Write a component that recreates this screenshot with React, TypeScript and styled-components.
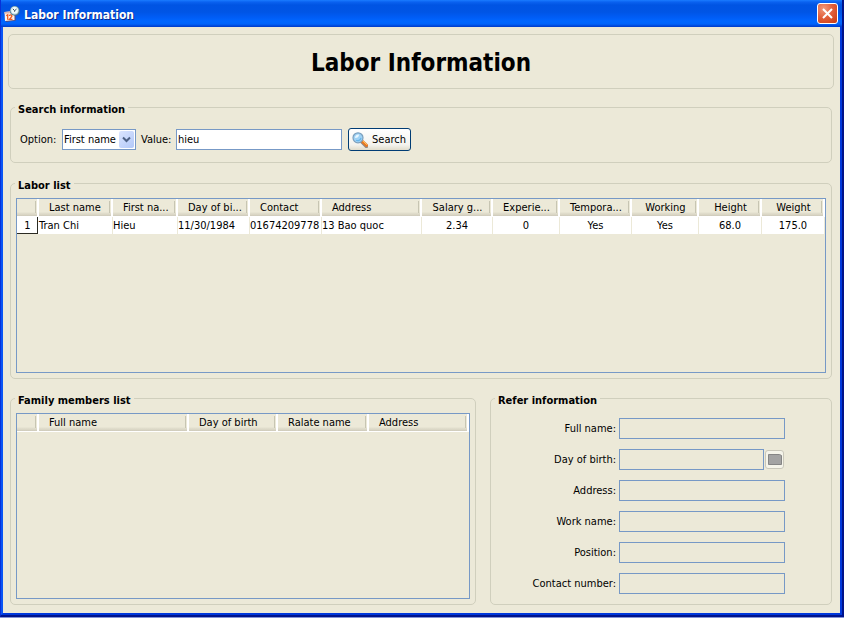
import React from "react";
import styled, { createGlobalStyle, css } from "styled-components";

const face = "#ece9d8";
const line = "#d0cfbd";
const blue = "#7799c6";

const GlobalStyle = createGlobalStyle`
  *, *::before, *::after { box-sizing: border-box; }
  body {
    margin: 0;
    background: #8593d6;
    color: #000;
    font-family: "DejaVu Sans Condensed", "DejaVu Sans", sans-serif;
    font-stretch: condensed;
    font-size: 11px;
    line-height: 14px;
  }
  input, select, button { font: inherit; color: inherit; margin: 0; }
`;

const Frame = styled.div`
  min-height: calc(100vh - 1px);
  display: grid;
  grid-template-rows: auto 1fr;
  border: solid;
  border-width: 0 2px 2px 1px;
  border-color: #00138c #00138c #00138c #0831d9;
`;

const TitleBar = styled.header`
  height: 27px;
  display: flex;
  align-items: center;
  gap: 4px;
  padding: 0 4px 0 3px;
  background: linear-gradient(
    #1a7cff 0, #0a62f0 2px, #0054e3 5px, #0055e5 12px, #005cf5 17px,
    #0066ff 21px, #0064fa 24px, #0046d8 26px, #003cc8 27px
  );
`;

const Caption = styled.span`
  flex: 1;
  color: #fff;
  font-size: 12px;
  font-weight: bold;
  line-height: 16px;
  padding-top: 2px;
  text-shadow: 1px 1px 0 #0a2a8c;
`;

const CloseButton = styled.button`
  width: 21px;
  height: 21px;
  padding: 0;
  display: grid;
  place-items: center;
  border: 1px solid #fff;
  border-radius: 3px;
  background: radial-gradient(circle at 30% 25%, #f09a7c 0, #e2603c 45%, #c8390f 100%);
`;

const Client = styled.main`
  min-width: 0;
  display: grid;
  grid-template-columns: minmax(0, 1fr);
  grid-template-rows: auto auto 1fr auto;
  padding: 7px 8px 8px 7px;
  background: ${face};
  border: solid;
  border-width: 0 2px 2px;
  border-color: #0042e6 #0038dc #0038dc #0a55f5;
`;

const Banner = styled.h1`
  margin: 0 -2px 10px;
  height: 55px;
  padding-top: 2px;
  display: flex;
  align-items: center;
  justify-content: center;
  border: 1px solid ${line};
  border-radius: 5px;
  font-size: 24px;
  line-height: 30px;
  font-weight: bold;
`;

const Group = styled.fieldset`
  min-width: 0;
  margin: 0;
  padding: 6px 5px 5px;
  border: 1px solid ${line};
  border-radius: 5px;
  display: grid;
  grid-template-columns: minmax(0, 1fr);
`;

const Legend = styled.legend`
  height: 17px;
  margin-left: -1px;
  padding: 4px 3px 0;
  line-height: 13px;
  font-weight: bold;
`;

const SearchGroup = styled(Group)`
  margin-bottom: 12px;
`;

const LaborGroup = styled(Group)`
  margin-bottom: 11px;
`;

const SearchRow = styled.form`
  display: flex;
  align-items: center;
  padding: 6px 4px;
`;

const SearchLabel = styled.label<{ $width: number }>`
  width: ${(p) => p.$width}px;
`;

const fieldStyle = css`
  height: 21px;
  border: 1px solid ${blue};
  border-radius: 0;
  outline: none;
`;

const SelectBox = styled.span`
  position: relative;
  width: 74px;
  height: 21px;
  margin-right: 5px;
`;

const Select = styled.select`
  ${fieldStyle}
  width: 100%;
  display: block;
  appearance: none;
  padding: 0 0 0 1px;
  background: #fff;
`;

const SelectArrow = styled.span`
  position: absolute;
  top: 2px;
  right: 2px;
  width: 15px;
  height: 17px;
  display: grid;
  place-items: center;
  border-radius: 2px;
  background: linear-gradient(135deg, #dbe5ff, #b2c8f8);
  pointer-events: none;
`;

const TextInput = styled.input`
  ${fieldStyle}
  width: 166px;
  padding: 0 1px;
  background: #fff;
`;

const SearchButton = styled.button`
  height: 23px;
  min-width: 63px;
  margin-left: 6px;
  padding: 0 4px 0 3px;
  display: flex;
  align-items: center;
  justify-content: space-between;
  gap: 3px;
  border: 1px solid #003c74;
  border-radius: 3px;
  background: linear-gradient(#fff, #f4f3ee 75%, #e0dccb);
`;

const TableBox = styled.div`
  border: 1px solid ${blue};
`;

const Table = styled.table`
  width: 100%;
  table-layout: fixed;
  border-collapse: separate;
  border-spacing: 0;
`;

const Column = styled.col<{ $width: number }>`
  width: ${(p) => p.$width}px;
`;

const HeadCell = styled.th<{ $center?: boolean }>`
  position: relative;
  height: 18px;
  padding: 0 ${(p) => (p.$center ? 3 : 0)}px 0 ${(p) => (p.$center ? 5 : 10)}px;
  overflow: hidden;
  font-weight: normal;
  line-height: 14px;
  text-align: ${(p) => (p.$center ? "center" : "left")};
  white-space: nowrap;
  border-right: 2px solid #fff;
  border-bottom: 1px solid #fff;
  background: linear-gradient(${face} 13px, #e2dfce 14px, #d8d4c3 16px, #cbc7b8 17px);
  &::after {
    content: "";
    position: absolute;
    top: 2px;
    right: 1px;
    width: 1px;
    height: 12px;
    background: #c7c5b2;
  }
`;

const Cell = styled.td<{ $center?: boolean }>`
  height: 17px;
  padding: 0;
  white-space: nowrap;
  text-align: ${(p) => (p.$center ? "center" : "left")};
  background: #fff;
  border-right: 1px solid ${face};
`;

const RowHead = styled.th`
  padding: 0;
  font-weight: normal;
  text-align: center;
  background: #fff;
  border-right: 1px solid #fff;
  box-shadow: inset -1px -1px 0 #2b2b22;
`;

const Lower = styled.div`
  display: grid;
  grid-template-columns: 466fr 342fr;
  gap: 14px;
`;

const ReferForm = styled.div`
  display: grid;
  grid-template-columns: 1fr 166px;
  align-items: center;
  gap: 10px 3px;
  padding: 5px 41px 5px 4px;
`;

const ReferLabel = styled.label`
  text-align: right;
`;

const ReferInput = styled.input`
  ${fieldStyle}
  width: 100%;
  min-width: 0;
  padding: 0 2px;
  background: ${face};
`;

const DateField = styled.div`
  display: flex;
  align-items: center;
  gap: 1px;
  padding-right: 1px;
`;

const DateButton = styled.button`
  flex: none;
  width: 19px;
  height: 19px;
  padding: 0;
  display: grid;
  place-items: center;
  border: 1px solid #c9c7ba;
  border-radius: 3px;
  background: #f5f4ea;
`;

const AppIcon = () => (
  <svg width="16" height="16" viewBox="0 0 16 16" aria-hidden="true">
    <path d="M.8 7l10.400-1.500.6 9L2 16z" fill="#5a4c78" />
    <path d="M.5 6l10-1v9l-9.500 1z" fill="#fff1e8" />
    <path d="M.5 6l10-1v1.800l-10 1z" fill="#dcb5ae" />
    <path d="M2.300 9.800l1.400-1v5M5.300 10c.3-1.600 3-1.400 2.500.4L5.500 13.300h3" fill="none" stroke="#ee5a20" strokeWidth="1.300" />
    <circle cx="10.800" cy="4.900" r="4.900" fill="#4f7488" />
    <circle cx="10.600" cy="4.500" r="4.200" fill="#a9cfdc" />
    <circle cx="10.600" cy="4.400" r="3.300" fill="#eefafc" />
    <path d="M8.800 2.800l1.800 1.900 1.900-1.600M10.600 4.700v1" fill="none" stroke="#2f4a5c" strokeWidth="1" />
  </svg>
);

const SearchIcon = () => (
  <svg width="16" height="16" viewBox="0 0 16 16" aria-hidden="true">
    <path d="M9.500 10l5 4.800" stroke="#8f8d88" strokeWidth="3" strokeLinecap="round" />
    <path d="M9.800 8.800l4.700 4.500" stroke="#e87722" strokeWidth="3" strokeLinecap="round" />
    <path d="M10.500 8.600l4 3.900" stroke="#ffc95a" strokeWidth="1" strokeLinecap="round" />
    <circle cx="6" cy="5.800" r="5" fill="#9fd2f5" stroke="#7b9fbd" strokeWidth="1.200" />
    <path d="M3 6a3.500 3.500 0 0 1 4-3.500C7 5 5.500 6 3 6z" fill="#e8f7ff" />
    <path d="M4 8.300c2 1 4.500 0 5-2.300" fill="none" stroke="#66b5ec" strokeWidth="1.200" />
  </svg>
);

type Col = { title: string; width: number; value?: string; center?: boolean };

const laborColumns: Col[] = [
  { title: "Last name", width: 74, value: "Tran Chi" },
  { title: "First na...", width: 65, value: "Hieu" },
  { title: "Day of bi...", width: 72, value: "11/30/1984" },
  { title: "Contact", width: 72, value: "01674209778" },
  { title: "Address", width: 100, value: "13 Bao quoc" },
  { title: "Salary g...", width: 71, value: "2.34", center: true },
  { title: "Experie...", width: 67, value: "0", center: true },
  { title: "Tempora...", width: 72, value: "Yes", center: true },
  { title: "Working", width: 67, value: "Yes", center: true },
  { title: "Height", width: 63, value: "68.0", center: true },
  { title: "Weight", width: 63, value: "175.0", center: true },
];

const familyColumns: Col[] = [
  { title: "Full name", width: 150 },
  { title: "Day of birth", width: 89 },
  { title: "Ralate name", width: 91 },
  { title: "Address", width: 100 },
];

const referFields = ["Full name", "Day of birth", "Address", "Work name", "Position", "Contact number"];

const Head = ({ columns }: { columns: Col[] }) => (
  <>
    <colgroup>
      <Column $width={22} />
      {columns.map((c) => <Column key={c.title} $width={c.width} />)}
    </colgroup>
    <thead>
      <tr>
        <HeadCell aria-label="Row" />
        {columns.map((c) => (
          <HeadCell key={c.title} scope="col" $center={c.center}>{c.title}</HeadCell>
        ))}
      </tr>
    </thead>
  </>
);

export default function App() {
  return (
    <Frame>
      <GlobalStyle />
      <TitleBar>
        <AppIcon />
        <Caption>Labor Information</Caption>
        <CloseButton type="button" aria-label="Close">
          <svg width="11" height="11" viewBox="0 0 11 11" aria-hidden="true">
            <path d="M1 1l9 9M10 1l-9 9" stroke="#fff" strokeWidth="2" />
          </svg>
        </CloseButton>
      </TitleBar>
      <Client>
        <Banner>Labor Information</Banner>
        <SearchGroup>
          <Legend>Search information</Legend>
          <SearchRow onSubmit={(e) => e.preventDefault()}>
            <SearchLabel $width={42} htmlFor="option">Option:</SearchLabel>
            <SelectBox>
              <Select id="option" defaultValue="First name">
                <option>First name</option>
                <option>Last name</option>
              </Select>
              <SelectArrow>
                <svg width="9" height="7" viewBox="0 0 9 7" aria-hidden="true">
                  <path d="M1 1.500l3.500 3.500L8 1.500" fill="none" stroke="#4d6185" strokeWidth="2" />
                </svg>
              </SelectArrow>
            </SelectBox>
            <SearchLabel $width={35} htmlFor="value">Value:</SearchLabel>
            <TextInput id="value" type="text" defaultValue="hieu" />
            <SearchButton type="submit">
              <SearchIcon />
              Search
            </SearchButton>
          </SearchRow>
        </SearchGroup>
        <LaborGroup>
          <Legend>Labor list</Legend>
          <TableBox>
            <Table>
              <Head columns={laborColumns} />
              <tbody>
                <tr>
                  <RowHead scope="row">1</RowHead>
                  {laborColumns.map((c) => (
                    <Cell key={c.title} $center={c.center}>{c.value}</Cell>
                  ))}
                </tr>
              </tbody>
            </Table>
          </TableBox>
        </LaborGroup>
        <Lower>
          <Group>
            <Legend>Family members list</Legend>
            <TableBox>
              <Table>
                <Head columns={familyColumns} />
              </Table>
            </TableBox>
          </Group>
          <Group>
            <Legend>Refer information</Legend>
            <ReferForm>
              {referFields.map((name) => {
                const id = name.toLowerCase().replace(/ /g, "-");
                return (
                  <React.Fragment key={id}>
                    <ReferLabel htmlFor={id}>{name}:</ReferLabel>
                    {id === "day-of-birth" ? (
                      <DateField>
                        <ReferInput id={id} type="text" readOnly />
                        <DateButton type="button" aria-label="Choose date" disabled>
                          <svg width="14" height="11" viewBox="0 0 14 11" aria-hidden="true">
                            <path d="M.5.5h11l2 1v9H.5z" fill="#a3a3a3" stroke="#858585" />
                          </svg>
                        </DateButton>
                      </DateField>
                    ) : (
                      <ReferInput id={id} type="text" readOnly />
                    )}
                  </React.Fragment>
                );
              })}
            </ReferForm>
          </Group>
        </Lower>
      </Client>
    </Frame>
  );
}
